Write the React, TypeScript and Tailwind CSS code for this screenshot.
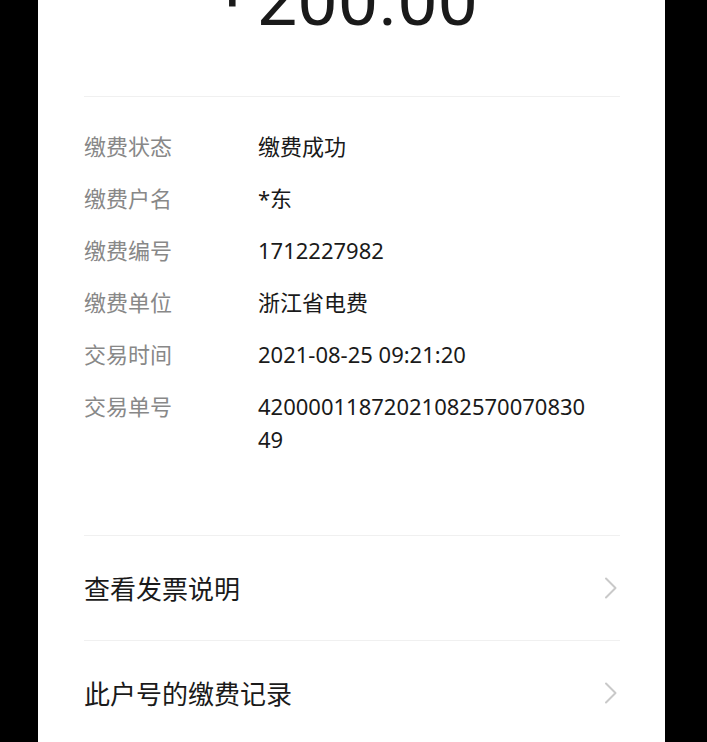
import React from 'react';

const rows: { label: string; value: string }[] = [
  { label: '缴费状态', value: '缴费成功' },
  { label: '缴费户名', value: '*东' },
  { label: '缴费编号', value: '1712227982' },
  { label: '缴费单位', value: '浙江省电费' },
  { label: '交易时间', value: '2021-08-25 09:21:20' },
  { label: '交易单号', value: '4200001187202108257007083049' },
];

const links = ['查看发票说明', '此户号的缴费记录'];

const Chevron = () => (
  <svg width="14" height="22" viewBox="0 0 14 22" fill="none" className="shrink-0">
    <path d="M2 1.5 L11.5 11 L2 20.5" stroke="#c9c9c9" strokeWidth="2" strokeLinecap="round" strokeLinejoin="round" />
  </svg>
);

export default function App() {
  return (
    <div
      className="h-[742px] w-full overflow-hidden bg-black flex"
      style={{ fontFamily: '"Noto Sans", "Noto Sans CJK SC", sans-serif' }}
    >
      <div className="ml-[38px] w-[627px] h-full bg-white px-[45px] pl-[46px] overflow-hidden">
        <div
          className="mt-[-35px] h-[72px] text-[72px] leading-[72px] text-[#1a1a1a] text-center pr-[14px]"
          style={{ fontFamily: 'Roboto, "Liberation Sans", sans-serif' }}
        >
          <span className="relative -top-[14px] mr-[4px]">+</span>200.00
        </div>

        <div className="mt-[59px] h-px bg-[#f0f0f0]" />

        <div className="mt-[33px] flex flex-col gap-[19px]">
          {rows.map((r) => (
            <div key={r.label} className="flex text-[22px] leading-[33px]">
              <div className="w-[174px] shrink-0 text-[#888888]">{r.label}</div>
              <div className="w-[333px] text-[#1a1a1a] break-all">{r.value}</div>
            </div>
          ))}
        </div>

        <div className="mt-[79px]">
          {links.map((l) => (
            <div key={l} className="border-t border-[#f0f0f0] h-[105px] flex items-center justify-between pr-[2px]">
              <span className="text-[26px] leading-[36px] text-[#1a1a1a] pt-[2px]">{l}</span>
              <Chevron />
            </div>
          ))}
        </div>
      </div>
    </div>
  );
}
